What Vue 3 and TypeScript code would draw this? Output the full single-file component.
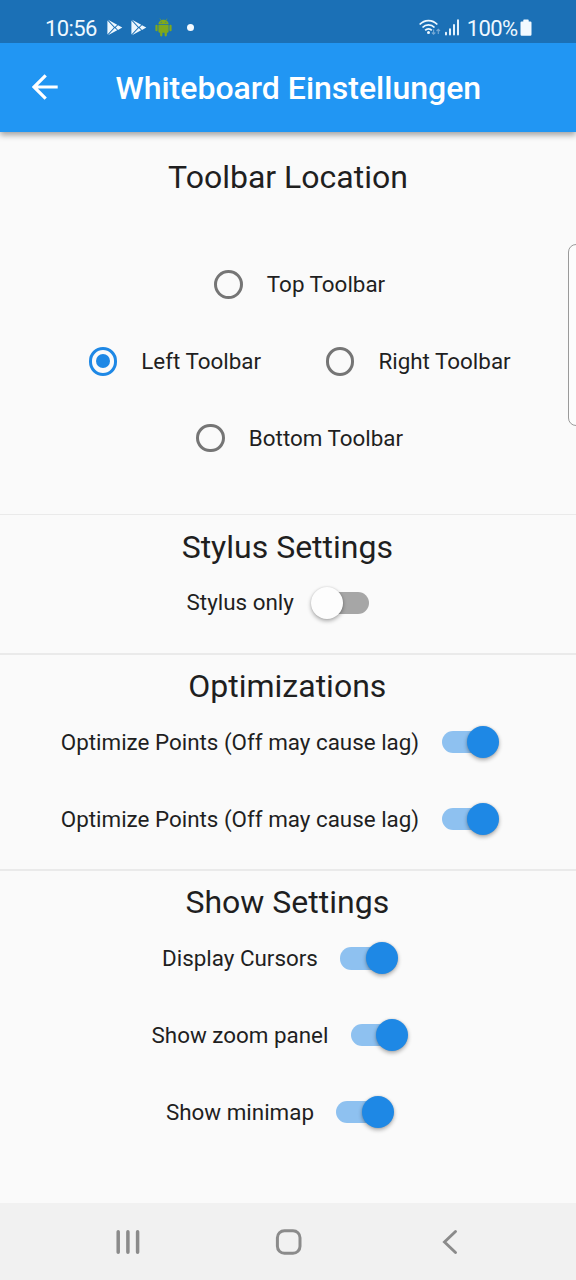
<script setup lang="ts">
interface Toggle {
  label: string
  on: boolean
}
interface Section {
  title: string
  toggles: Toggle[]
}
interface Choice {
  label: string
  selected: boolean
}

const toolbarRows: Choice[][] = [
  [{ label: 'Top Toolbar', selected: false }],
  [
    { label: 'Left Toolbar', selected: true },
    { label: 'Right Toolbar', selected: false },
  ],
  [{ label: 'Bottom Toolbar', selected: false }],
]

const sections: Section[] = [
  { title: 'Stylus Settings', toggles: [{ label: 'Stylus only', on: false }] },
  {
    title: 'Optimizations',
    toggles: [
      { label: 'Optimize Points (Off may cause lag)', on: true },
      { label: 'Optimize Points (Off may cause lag)', on: true },
    ],
  },
  {
    title: 'Show Settings',
    toggles: [
      { label: 'Display Cursors', on: true },
      { label: 'Show zoom panel', on: true },
      { label: 'Show minimap', on: true },
    ],
  },
]
</script>

<template>
  <div class="screen">
    <header class="top">
      <div class="status">
        <span class="clock">10:56</span>
        <svg v-for="n in 2" :key="n" class="play" width="16" height="17" viewBox="0 0 16 17">
          <path fill="#eef8ff" d="M1 .8 10.2 5.8 7.8 8.1ZM.4 1.6 6.9 8.5.4 15.4ZM1 16.2 7.8 9 10.2 11.3ZM11 6.2 15.3 8.5 11 10.9 8.7 8.5Z" />
        </svg>
        <svg class="droid" width="17" height="19" viewBox="0 0 17 19">
          <g fill="#7fa81c">
            <path d="M3.4 6.2C3.4 3.6 5.6 1.7 8.5 1.7S13.6 3.6 13.6 6.2Z" />
            <path d="M3.4 7H13.6V13.6Q13.6 14.7 12.5 14.7H4.5Q3.4 14.7 3.4 13.6Z" />
            <rect x=".4" y="6.7" width="2.2" height="6.6" rx="1.1" />
            <rect x="14.4" y="6.7" width="2.2" height="6.6" rx="1.1" />
            <rect x="5.1" y="13" width="2.3" height="5.4" rx="1.1" />
            <rect x="9.6" y="13" width="2.3" height="5.4" rx="1.1" />
          </g>
          <path d="M4.9.6 6 2.4M12.1.6 11 2.4" stroke="#7fa81c" stroke-width=".6" />
          <circle cx="6.2" cy="4.2" r=".55" fill="#1b70b6" />
          <circle cx="10.8" cy="4.2" r=".55" fill="#1b70b6" />
        </svg>
        <span class="dot"></span>
        <span class="spacer"></span>
        <svg class="wifi" width="22" height="18" viewBox="0 0 22 18">
          <g fill="none" stroke="#eef8ff" stroke-width="1.8">
            <path d="M.7 5.5C5.5.2 13.5.2 18.3 5.5" />
            <path d="M3.5 8.5C6.8 5 12.2 5 15.5 8.5" />
            <path d="M6.2 11.3C8 9.3 11 9.3 12.8 11.3" />
          </g>
          <circle cx="9.5" cy="13.5" r="1.5" fill="#eef8ff" />
          <path d="M14.6 10.5V15M12.9 13.5 14.6 15.3 16.3 13.5M19.3 15V10.3M17.6 12 19.3 10.2 21 12" fill="none" stroke="#76a9d5" stroke-width="1.1" />
        </svg>
        <svg class="signal" width="15" height="17" viewBox="0 0 15 17">
          <path d="M1 13.7V15.6M5 10.3V15.6M9 5.9V15.6M13 1.3V15.6" stroke="#eef8ff" stroke-width="1.9" stroke-linecap="round" />
        </svg>
        <span class="percent">100%</span>
        <svg class="battery" width="12" height="18" viewBox="0 0 12 18">
          <path d="M3.3 1.2Q3.3.5 4 .5H8Q8.7.5 8.7 1.2V2.4H10.3Q11.5 2.4 11.5 3.6V15.6Q11.5 16.8 10.3 16.8H1.7Q.5 16.8.5 15.6V3.6Q.5 2.4 1.7 2.4H3.3Z" fill="#f2f9ff" />
        </svg>
      </div>
      <div class="appbar">
        <svg class="back" width="27" height="26" viewBox="0 0 27 26">
          <path d="M25.7 13H2M13.7 1.3 2 13 13.7 24.7" fill="none" stroke="#fff" stroke-width="3.2" />
        </svg>
        <h1>Whiteboard Einstellungen</h1>
      </div>
    </header>

    <main>
      <section class="location">
        <h2 class="first">Toolbar Location</h2>
        <div class="choices">
          <div v-for="(row, i) in toolbarRows" :key="i" class="row pair">
            <label v-for="choice in row" :key="choice.label" class="choice">
              <span class="radio-box">
                <span class="radio" :class="{ selected: choice.selected }"></span>
              </span>
              <span class="label">{{ choice.label }}</span>
            </label>
          </div>
        </div>
      </section>
      <section v-for="section in sections" :key="section.title">
        <div class="divider"></div>
        <h2>{{ section.title }}</h2>
        <div v-for="(toggle, i) in section.toggles" :key="i" class="row">
          <span class="label">{{ toggle.label }}</span>
          <span class="switch" :class="{ on: toggle.on }"><span class="thumb"></span></span>
        </div>
      </section>
    </main>

    <nav>
      <svg width="26" height="28" viewBox="0 0 26 28">
        <path d="M3.2 3.7V24.3M12.9 3.7V24.3M22.6 3.7V24.3" stroke="#8b8b8b" stroke-width="3.5" stroke-linecap="round" />
      </svg>
      <svg width="28" height="28" viewBox="0 0 28 28">
        <rect x="2.4" y="2.7" width="22.6" height="22.6" rx="7" fill="none" stroke="#8b8b8b" stroke-width="3" />
      </svg>
      <svg width="26" height="28" viewBox="0 0 26 28">
        <path d="M18.5 3.5 7.5 14 18.5 24.5" fill="none" stroke="#8b8b8b" stroke-width="2.9" stroke-linecap="round" />
      </svg>
    </nav>
    <div class="edge-handle"></div>
  </div>
</template>

<style>
body {
  margin: 0;
}
</style>

<style scoped>
.screen {
  position: relative;
  display: flex;
  flex-direction: column;
  width: 576px;
  height: 1280px;
  overflow: hidden;
  background: #fafafa;
  color: #1f1f1f;
  font-family: Roboto, sans-serif;
}
.top {
  position: relative;
  height: 132px;
  background: #2196f3;
  box-shadow: 0 3px 6px rgba(0, 0, 0, 0.36);
}
.status {
  display: flex;
  align-items: center;
  box-sizing: border-box;
  height: 42.5px;
  padding: 13px 44px 0 45px;
  background: #1b70b6;
  color: #eef8ff;
  font-size: 22px;
  letter-spacing: -0.6px;
}
.clock,
.percent {
  padding-top: 1px;
}
.clock {
  width: 61.5px;
}
.play {
  margin-right: 8px;
}
.dot {
  width: 7px;
  height: 7px;
  margin-left: 15px;
  border-radius: 50%;
  background: #f4faff;
}
.spacer {
  flex: 1;
}
.signal {
  margin: 0 7px 0 4px;
}
.battery {
  margin-left: 2.5px;
}
.appbar {
  display: flex;
  align-items: center;
  height: 89.5px;
  padding-left: 31.5px;
}
h1 {
  margin: 2px 0 0 57px;
  font-size: 32px;
  font-weight: 500;
  line-height: 38px;
  color: #fff;
  white-space: nowrap;
}
main {
  flex: 1;
}
h2 {
  box-sizing: border-box;
  margin: 0;
  padding: 0.2px 1.4px 0 0;
  font-size: 32px;
  font-weight: 400;
  line-height: 38px;
  height: 37px;
  text-align: center;
}
.first {
  height: 63px;
  padding: 26px 0 0;
}
.choices {
  padding: 51px 0 25.4px;
}
.row {
  display: flex;
  align-items: center;
  justify-content: center;
  height: 76.8px;
}
.pair {
  gap: 40.6px;
  padding-right: 0.8px;
}
.choice {
  display: flex;
  align-items: center;
}
.radio-box {
  display: flex;
  align-items: center;
  justify-content: center;
  width: 76.8px;
}
.radio {
  display: flex;
  align-items: center;
  justify-content: center;
  box-sizing: border-box;
  width: 28.8px;
  height: 28.8px;
  border: 3.2px solid #757575;
  border-radius: 50%;
}
.selected {
  border-color: #1e88e5;
}
.selected::after {
  content: '';
  width: 14.4px;
  height: 14.4px;
  border-radius: 50%;
  background: #1e88e5;
}
.label {
  font-size: 22.4px;
  line-height: 28px;
  padding-bottom: 0.8px;
  white-space: nowrap;
}
.switch {
  display: flex;
  align-items: center;
  width: 57.6px;
  height: 22.4px;
  margin: 0 20.5px 0 17.5px;
  border-radius: 11.2px;
  background: linear-gradient(to right, transparent 10px, #a6a6a6 10px);
}
.on {
  justify-content: flex-end;
  margin: 0 16px 0 22.5px;
  background: linear-gradient(to left, transparent 10px, #8ec1f0 10px);
}
.thumb {
  flex: none;
  width: 32px;
  height: 32px;
  border-radius: 50%;
  background: #fdfdfd;
  box-shadow: 0 2px 4px rgba(0, 0, 0, 0.32), 0 0 2px rgba(0, 0, 0, 0.12);
}
.on .thumb {
  background: #1e88e5;
}
.divider {
  display: flex;
  align-items: center;
  height: 25.6px;
}
.divider::after {
  content: '';
  width: 100%;
  height: 1.5px;
  background: #eaeaea;
}
nav {
  display: flex;
  align-items: center;
  justify-content: space-between;
  box-sizing: border-box;
  height: 77px;
  padding: 0 113px 0 114.5px;
  background: #f1f1f1;
}
.edge-handle {
  position: absolute;
  top: 244px;
  right: -10px;
  box-sizing: border-box;
  width: 18px;
  height: 182px;
  border: 1.5px solid #9a9a9a;
  border-radius: 8px;
  background: #fcfcfc;
}
</style>
